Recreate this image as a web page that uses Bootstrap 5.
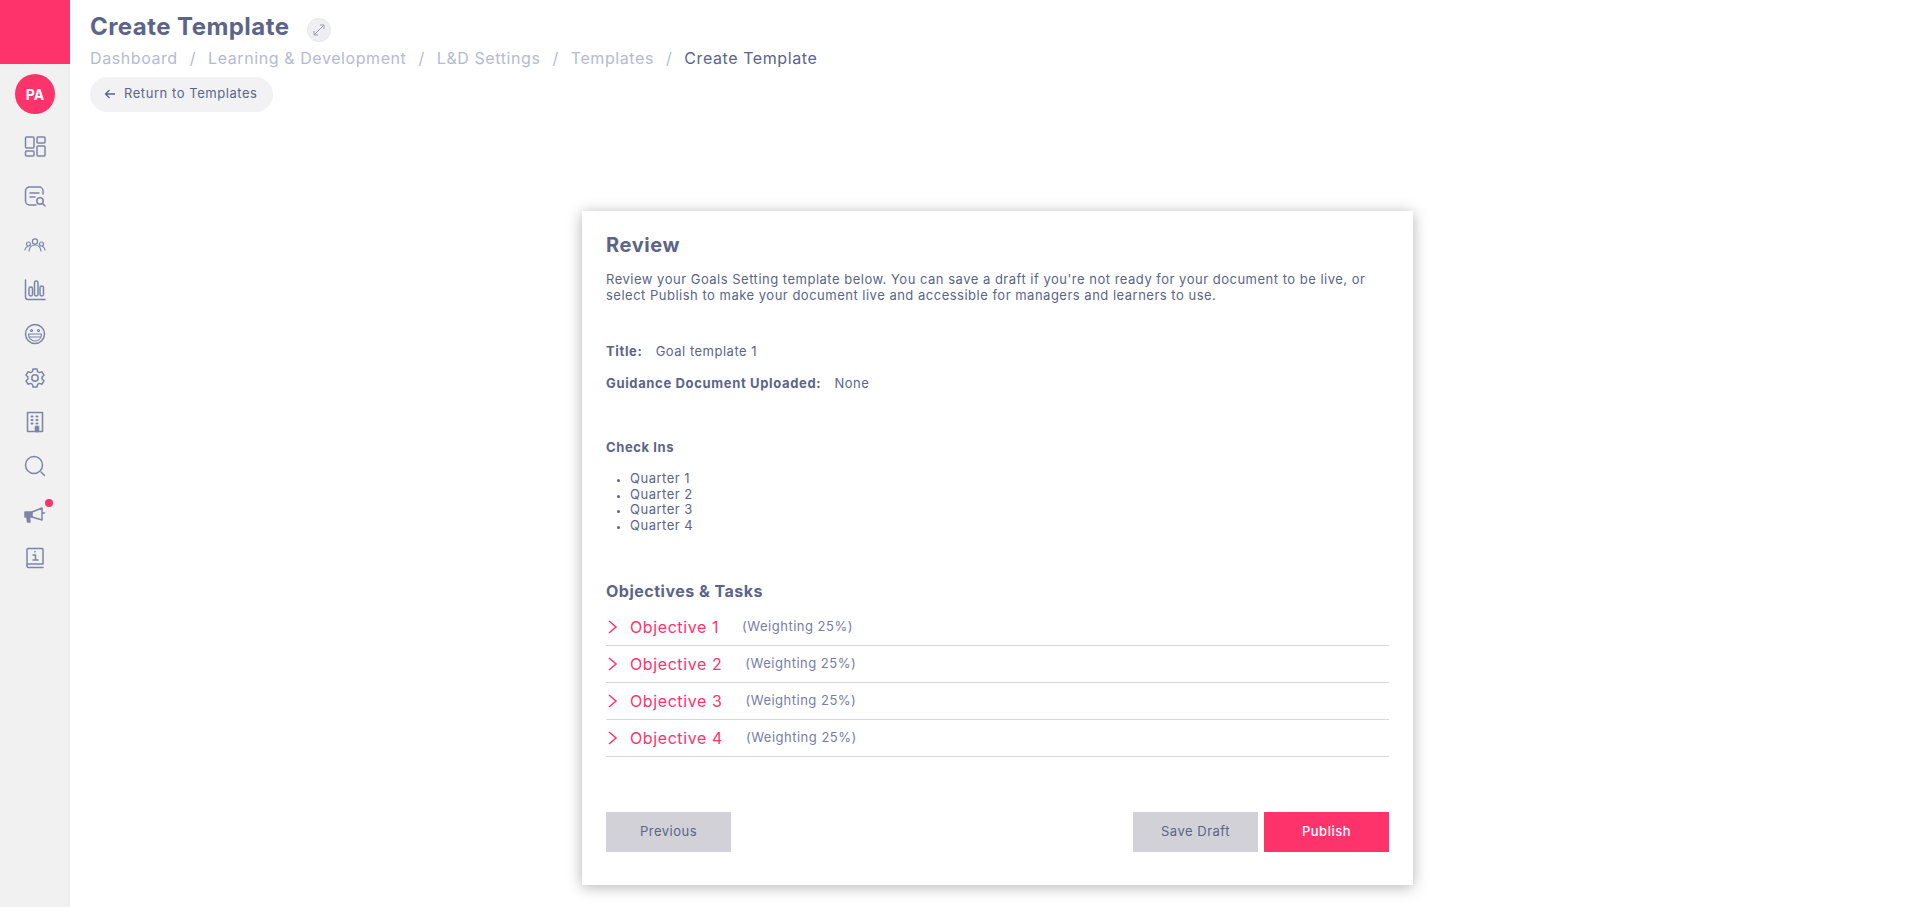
<!DOCTYPE html>
<html lang="en"><head><meta charset="utf-8"><title>Create Template</title>
<link href="https://cdn.jsdelivr.net/npm/bootstrap@5.3.0/dist/css/bootstrap.min.css" rel="stylesheet">
<style>
:root{--ink:#5c6488;--pink:#ff336b;--pale:#b5bad3;}
html,body{height:907px;overflow:hidden;}
body{font-family:Inter,"Liberation Sans",sans-serif;color:var(--ink);font-size:13px;letter-spacing:.5px;background:#fff;}
.shell{height:907px;}
.rail{width:70px;background:#f1f1f1;flex:none;letter-spacing:0;}
.rail-top{height:64px;background:var(--pink);}
.avatar{width:40px;height:40px;border-radius:50%;background:var(--pink);color:#fff;font-weight:700;font-size:14px;margin-top:10px;}
.rail-icons{margin-top:10px;}
.rail-slot{height:44px;width:70px;}
.rail-slot:nth-child(2){margin-top:6px;}
.rail-slot:nth-child(3){margin-top:5px;}
.rail-slot:nth-child(4){margin-top:1px;}
.rail-slot:nth-child(9){margin-top:4px;}
.rail-slot svg{width:22px;height:22px;fill:none;stroke:#7d84a8;stroke-width:1.5;stroke-linecap:round;stroke-linejoin:round;}
.rail-slot .solid{fill:#7d84a8;}
.rail-slot .thin{stroke-width:1.2;}
.rail-slot .heavy{stroke-width:2;}
.dot{position:absolute;width:8px;height:8px;border-radius:50%;background:var(--pink);top:7px;right:17px;}
.main{padding:13px 0 0 20px;min-width:0;}
.page-title{font-size:24px;font-weight:700;line-height:27px;margin:0;letter-spacing:.45px;}
.expand{width:24px;height:24px;border-radius:50%;background:#efeff1;border:1px solid #e8e8ea;margin-left:18px;margin-top:5px;}
.crumbs{--bs-breadcrumb-margin-bottom:0;--bs-breadcrumb-divider-color:var(--pale);--bs-breadcrumb-item-padding-x:12px;font-size:16px;letter-spacing:.58px;line-height:22px;margin-top:5px;margin-bottom:0;}
.crumbs a{color:var(--pale);text-decoration:none;}
.crumbs .active{color:var(--ink);}
.back{background:#f2f2f4;border-radius:18px;height:35px;width:183px;margin-top:8px;color:var(--ink);font-size:13px;letter-spacing:.55px;padding:0 0 2px 14px;border:0;}
.stage{padding-left:492px;margin-top:99px;}
.sheet{width:831px;height:674px;background:#fff;box-shadow:0 2px 14px rgba(0,0,0,.3);padding:22px 24px 0;border-radius:0;border:0;}
.sheet-h{font-size:20px;font-weight:700;line-height:24px;margin:0;letter-spacing:.6px;}
.intro{line-height:15.6px;margin:15px 0 0;}
.fact{line-height:16px;margin:0;}
.fact-a{margin-top:40px;}
.fact-b{margin-top:16px;}
.fact b{font-weight:700;margin-right:9px;letter-spacing:.65px;}
.chk{line-height:16px;font-weight:700;margin:48px 0 0;letter-spacing:.6px;}
.qs{margin:16px 0 0;padding-left:24px;line-height:15.6px;}
.qs li::marker{font-size:10px;}
.obj-h{font-size:16px;font-weight:700;line-height:20px;margin:47px 0 0;letter-spacing:.5px;}
.obj-list{--bs-list-group-bg:transparent;--bs-list-group-item-padding-x:0;--bs-list-group-item-padding-y:0;margin-top:8px;}
.list-group-flush>.obj-row,.list-group-flush>.obj-row:last-child{height:37px;gap:11px;color:#767da6;border:0;border-bottom:1px solid #d8d8d8;}
.obj-row svg{width:12px;height:16px;fill:none;stroke:var(--pink);stroke-width:1.5;margin-left:1px;flex:none;}
.obj-name{color:var(--pink);font-size:16px;letter-spacing:.6px;margin-right:12px;}
.foot{margin-top:55px;}
.act{width:125px;height:40px;border:0;border-radius:0;background:#d1d1d7;color:var(--ink);font-size:13px;letter-spacing:.5px;--bs-btn-padding-y:0;}
.act-go{background:var(--pink);color:#fff;font-weight:500;}
.act-gap{gap:6px;}
</style></head>
<body>
<div class="shell d-flex">
<nav class="rail d-flex flex-column align-items-center">
  <div class="rail-top w-100"></div>
  <div class="avatar d-flex align-items-center justify-content-center">PA</div>
  <div class="rail-icons d-flex flex-column">
    <div class="rail-slot d-flex align-items-center justify-content-center"><svg viewBox="0 0 22 22"><rect x="1.500" y="2" width="8.500" height="11" rx="1"/><rect x="13" y="2" width="8" height="6" rx="1"/><rect x="1.500" y="16" width="8.500" height="5" rx="1"/><rect x="13" y="11" width="8" height="10" rx="1"/></svg></div>
    <div class="rail-slot d-flex align-items-center justify-content-center"><svg viewBox="0 0 22 22"><path d="M19 9V6a4 4 0 0 0-4-4H5.500a4 4 0 0 0-4 4v10a4 4 0 0 0 4 4H12"/><path d="M6 8h9M6 12h5"/><circle cx="16" cy="16" r="3.200"/><path d="M18.500 18.500 21 21"/></svg></div>
    <div class="rail-slot d-flex align-items-center justify-content-center"><svg viewBox="0 0 22 22"><g class="thin"><circle cx="11" cy="7.500" r="2.600"/><circle cx="4.500" cy="10" r="2"/><circle cx="17.500" cy="10" r="2"/><path d="M5 17c.5-4 3-6 6-6s5.500 2 6 6M1 16c.2-2 1.200-3 2.500-3.500M21 16c-.2-2-1.200-3-2.500-3.500"/></g></svg></div>
    <div class="rail-slot d-flex align-items-center justify-content-center"><svg viewBox="0 0 22 22"><path d="M1.500 1v17a2.500 2.500 0 0 0 2.500 2.500h17"/><rect x="5" y="8" width="3.500" height="9" rx="1.700"/><rect x="10.500" y="2" width="3.500" height="15" rx="1.700"/><rect x="16" y="7" width="3.500" height="10" rx="1.700"/></svg></div>
    <div class="rail-slot d-flex align-items-center justify-content-center"><svg viewBox="0 0 22 22"><circle cx="11" cy="11" r="9.500"/><circle class="thin" cx="7.500" cy="7.500" r="1"/><circle class="thin" cx="14.500" cy="7.500" r="1"/><path class="thin" d="M4.500 11h13c0 4.500-3 7-6.500 7s-6.500-2.500-6.500-7zM5.500 14h11"/></svg></div>
    <div class="rail-slot d-flex align-items-center justify-content-center"><svg viewBox="0 0 22 22"><circle cx="11" cy="11" r="3.200"/><path d="M9 2h4l.6 2.600 1.800 1 2.600-.8 2 3.400-2 1.800v2l2 1.800-2 3.400-2.600-.8-1.800 1L13 20H9l-.6-2.600-1.800-1-2.600.8-2-3.400 2-1.800v-2l-2-1.800 2-3.400 2.600.8 1.800-1z"/></svg></div>
    <div class="rail-slot d-flex align-items-center justify-content-center"><svg viewBox="0 0 22 22"><rect x="3.500" y="1.500" width="15" height="19"/><path class="heavy" d="M7.500 5.500h1M12.500 5.500h1M7.500 9h1M12.500 9h1M7.500 12.500h1M12.500 12.500h1"/><path class="solid" d="M11.500 20.500V15.500h3v5z"/></svg></div>
    <div class="rail-slot d-flex align-items-center justify-content-center"><svg viewBox="0 0 22 22"><circle cx="10" cy="10" r="8.500"/><path d="M17 17l3.500 3.500"/></svg></div>
    <div class="rail-slot d-flex align-items-center justify-content-center position-relative"><svg viewBox="0 0 22 22"><path class="solid" d="M1 9h7v5H5.500L6 19H3.500L3 14H1z"/><path d="M8 9l10-4v12L8 14M18 10h2.500"/></svg><span class="dot"></span></div>
    <div class="rail-slot d-flex align-items-center justify-content-center"><svg viewBox="0 0 22 22"><path d="M3 18V2.500A1 1 0 0 1 4 1.500h14a1 1 0 0 1 1 1V17H4.500A1.500 1.500 0 0 0 3 18.500 1.500 1.500 0 0 0 4.500 20.500H19"/><path d="M9 8h2.500v5M9 13h5M11 4.500v.5"/></svg></div>
  </div>
</nav>
<main class="main flex-grow-1">
  <div class="d-flex align-items-start"><h1 class="page-title">Create Template</h1>
    <span class="expand d-inline-flex align-items-center justify-content-center"><svg width="14" height="14" viewBox="0 0 14 14" fill="none" stroke="#9a9fb8" stroke-width="1"><path d="M2 12 12 2M8 2h4v4M2 8v4h4"/></svg></span></div>
  <nav aria-label="breadcrumb"><ol class="breadcrumb crumbs">
    <li class="breadcrumb-item"><a href="#">Dashboard</a></li>
    <li class="breadcrumb-item"><a href="#">Learning &amp; Development</a></li>
    <li class="breadcrumb-item"><a href="#">L&amp;D Settings</a></li>
    <li class="breadcrumb-item"><a href="#">Templates</a></li>
    <li class="breadcrumb-item active" aria-current="page">Create Template</li>
  </ol></nav>
  <button class="btn back d-flex align-items-center gap-2" type="button"><svg width="12" height="12" viewBox="0 0 12 12" fill="none" stroke="#5c6488" stroke-width="1.300"><path d="M11 6H1.500M5.500 2 1.500 6l4 4"/></svg>Return to Templates</button>
  <div class="stage">
    <section class="card sheet">
      <h2 class="sheet-h">Review</h2>
      <p class="intro">Review your Goals Setting template below. You can save a draft if you're not ready for your document to be live, or select Publish to make your document live and accessible for managers and learners to use.</p>
      <p class="fact fact-a"><b>Title:</b> Goal template 1</p>
      <p class="fact fact-b"><b>Guidance Document Uploaded:</b> None</p>
      <p class="chk">Check Ins</p>
      <ul class="qs"><li>Quarter 1</li><li>Quarter 2</li><li>Quarter 3</li><li>Quarter 4</li></ul>
      <h3 class="obj-h">Objectives &amp; Tasks</h3>
      <div class="list-group list-group-flush obj-list">
        <div class="list-group-item obj-row d-flex align-items-center"><svg viewBox="0 0 12 16"><path d="M2 2l7 6-7 6"/></svg><span class="obj-name">Objective 1</span><span>(Weighting 25%)</span></div>
        <div class="list-group-item obj-row d-flex align-items-center"><svg viewBox="0 0 12 16"><path d="M2 2l7 6-7 6"/></svg><span class="obj-name">Objective 2</span><span>(Weighting 25%)</span></div>
        <div class="list-group-item obj-row d-flex align-items-center"><svg viewBox="0 0 12 16"><path d="M2 2l7 6-7 6"/></svg><span class="obj-name">Objective 3</span><span>(Weighting 25%)</span></div>
        <div class="list-group-item obj-row d-flex align-items-center"><svg viewBox="0 0 12 16"><path d="M2 2l7 6-7 6"/></svg><span class="obj-name">Objective 4</span><span>(Weighting 25%)</span></div>
      </div>
      <div class="foot d-flex justify-content-between">
        <button class="btn act" type="button">Previous</button>
        <div class="d-flex act-gap"><button class="btn act" type="button">Save Draft</button><button class="btn act act-go" type="button">Publish</button></div>
      </div>
    </section>
  </div>
</main>
</div>
</body></html>
